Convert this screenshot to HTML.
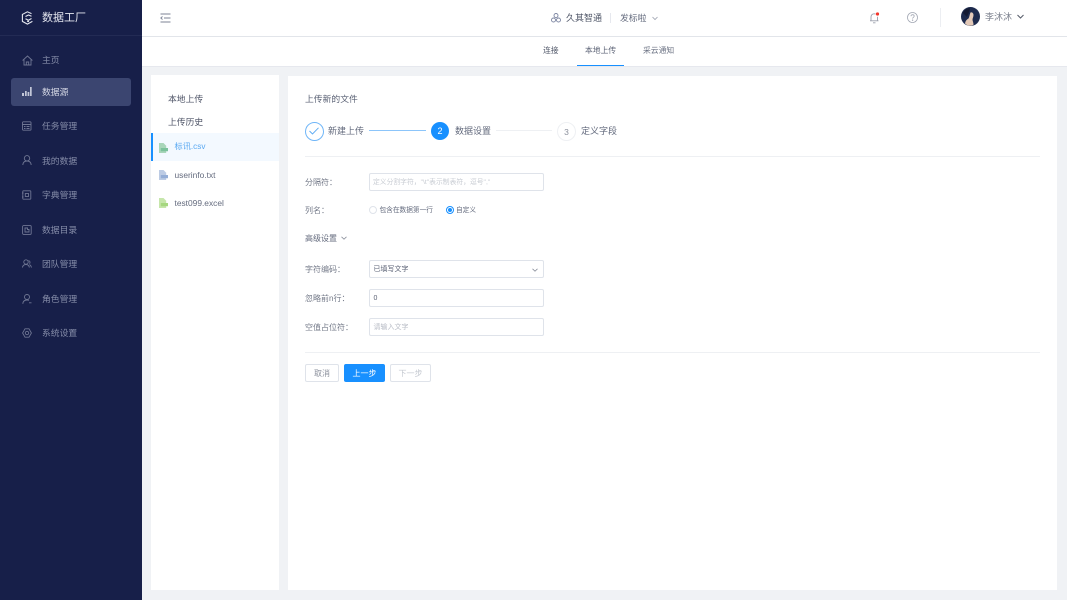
<!DOCTYPE html>
<html lang="zh"><head><meta charset="utf-8"><title>数据工厂</title>
<style>
html,body{margin:0;padding:0;width:1067px;height:600px;overflow:hidden;background:#f0f2f5;font-family:"Liberation Sans","Noto Sans CJK SC",sans-serif}
.a{position:absolute}
.t{position:absolute;white-space:nowrap;line-height:14px;height:14px}
svg{position:absolute;overflow:visible}
.side{color:#858ca8;font-size:8.800px}
.lb{color:#757b8a;font-size:8px}
.inp{position:absolute;left:369px;width:173px;height:16px;border:1px solid #dfe3ea;border-radius:2px;background:#fff}
.btn{position:absolute;top:364px;height:16px;border:1px solid #dfe3ea;border-radius:2px;text-align:center;line-height:17px;font-size:8px;background:#fff}
</style></head><body>
<div class="a" style="left:0;top:0;width:142px;height:600px;background:#171f49"></div>
<div class="a" style="left:0;top:35px;width:142px;height:1px;background:#232b54"></div>
<svg style="left:21px;top:11px" width="13" height="14" viewBox="0 0 13 14" fill="none" stroke="#e6e8f0" stroke-width="1.100"><path d="M10.500 2.600L6.400 .8 1.400 3.400v7l5 2.700 5-2.700"/><path d="M4.500 5.500l3-1.500 3 1.200M4.500 7.700l3 1.500 3-1.700M6 10.200l2 .4"/></svg>
<div class="t" style="left:42px;top:11px;font-size:11px;color:#e3e5ee">数据工厂</div>
<div class="a" style="left:11px;top:78px;width:120px;height:28px;border-radius:3px;background:#3b4570"></div>

<svg style="left:22px;top:55px" width="11" height="11" viewBox="0 0 11 11" fill="none" stroke="#6f7693" stroke-width=".9"><path d="M.6 5.500L5.500 1l4.900 4.500M2 4.600V10h7V4.600M4.300 10V7h2.400v3"/></svg>
<div class="t side" style="left:42px;top:53px">主页</div>
<svg style="left:22px;top:86px" width="10" height="10" viewBox="0 0 10 10" fill="#c3c7d8"><path d="M0 7h2v3H0zM3 5h1.700v5H3zM5.600 6h1.700v4H5.600zM8 1h1.700v9H8z"/></svg>
<div class="t" style="left:42px;top:85px;font-size:8.800px;color:#d5d8e5">数据源</div>
<svg style="left:22px;top:121px" width="10" height="10" viewBox="0 0 10 10" fill="none" stroke="#6f7693" stroke-width=".9"><rect x=".5" y=".8" width="8.500" height="8.400" rx=".8"/><path d="M.5 3.500h8.500M2 5.500h1.500M4.500 5.500H7.500M2 7.500h1.500M4.500 7.500H7.500"/></svg>
<div class="t side" style="left:42px;top:119px">任务管理</div>
<svg style="left:22px;top:155px" width="10" height="10" viewBox="0 0 10 10" fill="none" stroke="#6f7693" stroke-width=".9"><circle cx="5" cy="3.300" r="2.700"/><path d="M.8 10c.2-2.600 1.800-4 4.200-4s4 1.400 4.200 4"/></svg>
<div class="t side" style="left:42px;top:154px">我的数据</div>
<svg style="left:22px;top:190px" width="10" height="10" viewBox="0 0 10 10" fill="none" stroke="#6f7693" stroke-width=".9"><rect x=".8" y=".8" width="8" height="8.400" rx=".6"/><rect x="3.300" y="3.500" width="3.200" height="3"/><path d="M0 3h1.500M0 7h1.500"/></svg>
<div class="t side" style="left:42px;top:188px">字典管理</div>
<svg style="left:22px;top:225px" width="10" height="10" viewBox="0 0 10 10" fill="none" stroke="#6f7693" stroke-width=".9"><rect x=".6" y=".6" width="8.600" height="8.800" rx="1"/><path d="M3 3h2.500v1.500H7v2.500H3z"/></svg>
<div class="t side" style="left:42px;top:223px">数据目录</div>
<svg style="left:22px;top:259px" width="10" height="10" viewBox="0 0 10 10" fill="none" stroke="#6f7693" stroke-width=".9"><circle cx="4" cy="3" r="2.200"/><path d="M.4 8.500C.8 6.500 2 5.500 4 5.500s3 1 3.400 3M6.500 1.500c1.500.4 2 2 1 3.200M7.500 5.500c1 .6 1.600 1.500 2 3"/></svg>
<div class="t side" style="left:42px;top:257px">团队管理</div>
<svg style="left:22px;top:294px" width="10" height="10" viewBox="0 0 10 10" fill="none" stroke="#6f7693" stroke-width=".9"><circle cx="5" cy="3" r="2.500"/><path d="M.8 9.800C1 7.300 2.600 6 5 6c.8 0 1.500.1 2 .4M7 8.800h2.500"/></svg>
<div class="t side" style="left:42px;top:292px">角色管理</div>
<svg style="left:22px;top:328px" width="10" height="10" viewBox="0 0 10 10" fill="none" stroke="#6f7693" stroke-width=".9"><path d="M3 .8h4L9.400 5 7 9.200H3L.6 5z"/><circle cx="5" cy="5" r="1.700"/></svg>
<div class="t side" style="left:42px;top:326px">系统设置</div>

<div class="a" style="left:142px;top:0;width:925px;height:36px;background:#fff;border-bottom:1px solid #e2e5ea"></div>
<div class="a" style="left:142px;top:37px;width:925px;height:29px;background:#fff;border-bottom:1px solid #e6e8ee"></div>
<svg style="left:160px;top:13px" width="11" height="10" viewBox="0 0 11 10" fill="none" stroke="#7d8396" stroke-width=".9"><path d="M.5 1h10M4 5h6.500M.5 9h10"/><path d="M2.500 3.500L.8 5l1.700 1.500" /></svg>
<svg style="left:551px;top:13px" width="10" height="10" viewBox="0 0 10 10" fill="none" stroke="#7d86a2" stroke-width=".9"><circle cx="5" cy="2.500" r="2"/><circle cx="2.500" cy="7" r="2"/><circle cx="7.500" cy="7" r="2"/></svg>
<div class="t" style="left:566px;top:11px;font-size:9px;color:#4d5466">久其智通</div>
<div class="a" style="left:610px;top:13px;width:1px;height:10px;background:#e6e8ee"></div>
<div class="t" style="left:620px;top:11px;font-size:8.800px;color:#646b7e">发标啦</div>
<svg style="left:652px;top:16px" width="6" height="5" viewBox="0 0 6 5" fill="none" stroke="#9aa0ae" stroke-width=".8"><path d="M.5 1L3 3.500 5.500 1"/></svg>

<svg style="left:869px;top:12px" width="11" height="12" viewBox="0 0 11 12" fill="none" stroke="#9a9fac" stroke-width=".9"><path d="M1 8.800h8.500M2 8.800V5C2 3 3.300 1.800 5.200 1.800c.6 0 1 .1 1.400.3M8.500 4.800v4M4 10.800h2.500"/><circle cx="8.500" cy="2" r="1.600" fill="#f5362b" stroke="none"/></svg>
<svg style="left:907px;top:12px" width="11" height="11" viewBox="0 0 11 11" fill="none" stroke="#a3a8b4" stroke-width=".8"><circle cx="5.500" cy="5.500" r="5"/><path d="M3.900 4.200c.2-1 .9-1.500 1.700-1.500 1 0 1.600.7 1.600 1.400 0 1.200-1.600 1.200-1.600 2.500"/><circle cx="5.600" cy="8.200" r=".3"/></svg>
<div class="a" style="left:940px;top:8px;width:1px;height:19px;background:#eceef2"></div>
<svg style="left:961px;top:7px" width="19" height="19" viewBox="0 0 19 19"><circle cx="9.500" cy="9.500" r="9.500" fill="#1d2a4d"/><path d="M4 16.500c.5-3 2-4 3.500-5 1-1.500 1-4 2-6 1.500-.5 3 .5 3 2.500s-1 3-1 5c.5 2 1 3 1 4.800-2.500 1.500-6 1.300-8.500-1.300z" fill="#e3c9b8"/><path d="M2 6c1-3 4-5 7-5 0 3-2 6-3 9z" fill="#141a33"/></svg>
<div class="t" style="left:985px;top:10px;font-size:9px;color:#7a7f8c">李沐沐</div>
<svg style="left:1017px;top:14px" width="7" height="5" viewBox="0 0 7 5" fill="none" stroke="#555b68" stroke-width="1"><path d="M.5 1L3.500 4 6.500 1"/></svg>

<div class="t" style="left:543px;top:44px;font-size:7.800px;color:#4d5466">连接</div>
<div class="t" style="left:585px;top:44px;font-size:7.800px;color:#5b6275">本地上传</div>
<div class="t" style="left:643px;top:44px;font-size:7.800px;color:#6c7384">采云通知</div>
<div class="a" style="left:577px;top:65px;width:47px;height:1px;background:#1890ff"></div>

<div class="a" style="left:151px;top:75px;width:128px;height:515px;background:#fff"></div>
<div class="t" style="left:168px;top:92px;font-size:8.800px;color:#4d5366">本地上传</div>
<div class="t" style="left:168px;top:115px;font-size:8.800px;color:#4d5366">上传历史</div>
<div class="a" style="left:151px;top:133px;width:128px;height:28px;background:#f3f9ff"></div>
<div class="a" style="left:151px;top:133px;width:2px;height:28px;background:#1890ff"></div>
<svg style="left:159px;top:143px" width="9" height="10" viewBox="0 0 10 11"><path d="M0 0h5l3 3v8H0z" fill="#a9d6ba"/><rect x="2" y="5.500" width="8" height="3.600" fill="#7cc29c"/></svg>
<div class="t" style="left:174.500px;top:140px;font-size:8.200px;color:#5aa9f2">标讯.csv</div>
<svg style="left:159px;top:170px" width="9" height="10" viewBox="0 0 10 11"><path d="M0 0h5l3 3v8H0z" fill="#bccbe4"/><rect x="2" y="5.500" width="8" height="3.600" fill="#94add6"/></svg>
<div class="t" style="left:174.500px;top:168px;font-size:8.400px;color:#646b7e">userinfo.txt</div>
<svg style="left:159px;top:198px" width="9" height="10" viewBox="0 0 10 11"><path d="M0 0h5l3 3v8H0z" fill="#c6e6ab"/><rect x="2" y="5.500" width="8" height="3.600" fill="#a6d780"/></svg>
<div class="t" style="left:174.500px;top:196px;font-size:8.400px;color:#646b7e">test099.excel</div>

<div class="a" style="left:288px;top:76px;width:769px;height:514px;background:#fff"></div>
<div class="t" style="left:305px;top:92px;font-size:8.800px;color:#5b6275">上传新的文件</div>

<div class="a" style="left:305px;top:122px;width:17px;height:17px;border:1px solid #70b6f8;border-radius:50%"></div>
<svg style="left:309px;top:127px" width="10" height="8" viewBox="0 0 10 8" fill="none" stroke="#5aa9f2" stroke-width=".9"><path d="M.5 4l3 3L9.500 .8"/></svg>
<div class="t" style="left:328px;top:124px;font-size:9px;color:#646b7e">新建上传</div>
<div class="a" style="left:369px;top:130px;width:57px;height:1px;background:#8cc5fa"></div>
<div class="a" style="left:431px;top:122px;width:18px;height:18px;background:#1890ff;border-radius:50%;color:#fff;font-size:9px;line-height:19px;text-align:center">2</div>
<div class="t" style="left:455px;top:124px;font-size:9px;color:#646b7e">数据设置</div>
<div class="a" style="left:496px;top:130px;width:56px;height:1px;background:#eef0f3"></div>
<div class="a" style="left:557px;top:122px;width:17px;height:17px;border:1px solid #eef0f3;border-radius:50%;color:#8b909c;font-size:8.500px;line-height:18px;text-align:center">3</div>
<div class="t" style="left:581px;top:124px;font-size:9px;color:#646b7e">定义字段</div>
<div class="a" style="left:305px;top:156px;width:735px;height:1px;background:#eef0f3"></div>

<div class="t lb" style="left:305px;top:176px">分隔符：</div>
<div class="inp" style="top:173px"></div>
<div class="t" style="left:373px;top:176px;font-size:6.800px;color:#c8ccd3">定义分割字符，"\t"表示制表符，逗号","</div>
<div class="t lb" style="left:305px;top:204px">列名：</div>
<div class="a" style="left:369px;top:206px;width:6px;height:6px;border:1px solid #dfe3ea;border-radius:50%"></div>
<div class="t" style="left:379.500px;top:204px;font-size:6.700px;color:#646b7e">包含在数据第一行</div>
<div class="a" style="left:446px;top:206px;width:6px;height:6px;border:1px solid #1890ff;border-radius:50%"></div>
<div class="a" style="left:448px;top:208px;width:4px;height:4px;background:#1890ff;border-radius:50%"></div>
<div class="t" style="left:456px;top:204px;font-size:6.700px;color:#646b7e">自定义</div>

<div class="t lb" style="left:305px;top:232px;color:#646b7e">高级设置</div>
<svg style="left:341px;top:236px" width="6" height="4" viewBox="0 0 6 4" fill="none" stroke="#8b909c" stroke-width=".8"><path d="M.5 .8L3 3.200 5.500 .8"/></svg>

<div class="t lb" style="left:305px;top:263px">字符编码：</div>
<div class="inp" style="top:260px"></div>
<div class="t" style="left:373.500px;top:263px;font-size:7px;color:#5b6275">已填写文字</div>
<svg style="left:532px;top:268px" width="6" height="4" viewBox="0 0 6 4" fill="none" stroke="#8b909c" stroke-width=".8"><path d="M.5 .8L3 3.200 5.500 .8"/></svg>
<div class="t lb" style="left:305px;top:292px">忽略前n行：</div>
<div class="inp" style="top:289px"></div>
<div class="t" style="left:373.500px;top:292px;font-size:7px;color:#5b6275">0</div>
<div class="t lb" style="left:305px;top:321px">空值占位符：</div>
<div class="inp" style="top:318px"></div>
<div class="t" style="left:373.500px;top:321px;font-size:7px;color:#b8bcc6">请输入文字</div>
<div class="a" style="left:305px;top:352px;width:735px;height:1px;background:#eef0f3"></div>

<div class="btn" style="left:305px;width:32px;color:#8b909c">取消</div>
<div class="btn" style="left:344px;width:39px;background:#1890ff;border-color:#1890ff;color:#fff">上一步</div>
<div class="btn" style="left:390px;width:39px;color:#c4c8d0">下一步</div>
</body></html>
